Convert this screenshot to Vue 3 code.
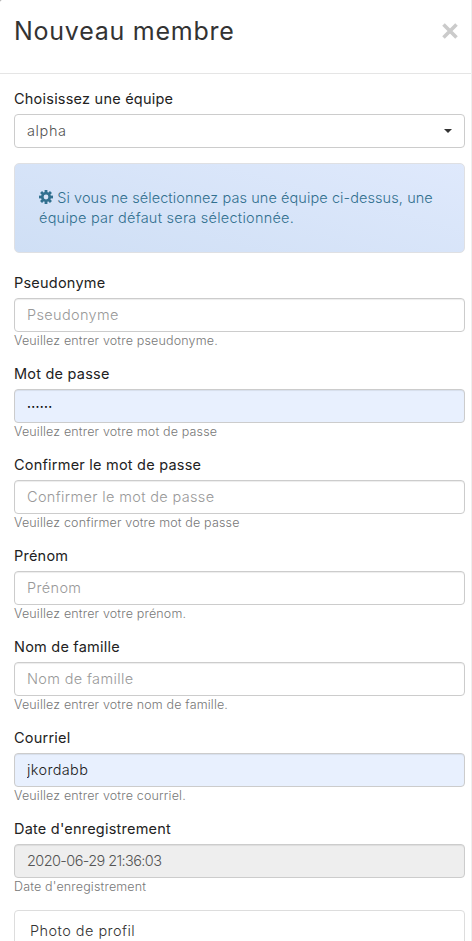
<script setup>
import { reactive } from 'vue'

const fields = reactive([
  { id: 'username', label: 'Pseudonyme', value: '', hint: 'Veuillez entrer votre pseudonyme.' },
  { id: 'password', label: 'Mot de passe', value: 'secret', type: 'password', filled: true, hint: 'Veuillez entrer votre mot de passe' },
  { id: 'confirm', label: 'Confirmer le mot de passe', value: '', hint: 'Veuillez confirmer votre mot de passe' },
  { id: 'firstname', label: 'Prénom', value: '', hint: 'Veuillez entrer votre prénom.' },
  { id: 'lastname', label: 'Nom de famille', value: '', hint: 'Veuillez entrer votre nom de famille.' },
  { id: 'email', label: 'Courriel', value: 'jkordabb', filled: true, hint: 'Veuillez entrer votre courriel.' },
  { id: 'date', label: "Date d'enregistrement", value: '2020-06-29 21:36:03', disabled: true, hint: "Date d'enregistrement" },
])
</script>

<template>
  <div class="modal">
    <header class="modal-header">
      <h1 class="title">Nouveau membre</h1>
      <button class="close" type="button" aria-label="Fermer">
        <svg width="16" height="16" viewBox="0 0 16 16">
          <path d="M1.5 1.5 14.5 14.5M14.5 1.5 1.5 14.5" fill="none" stroke="#cbcbcb" stroke-width="3.6" />
        </svg>
      </button>
    </header>
    <main class="modal-body">
      <div class="group">
        <label class="label">Choisissez une équipe</label>
        <div class="control select">
          <span>alpha</span>
          <svg width="8" height="4" viewBox="0 0 8 4"><path d="M0 0h8L4 4z" fill="#333" /></svg>
        </div>
      </div>
      <div class="alert">
        <svg class="gear" width="14" height="14" viewBox="0 0 14 14">
          <g fill="#31708f">
            <rect x="5.6" y="0" width="2.8" height="14" />
            <rect x="5.6" y="0" width="2.8" height="14" transform="rotate(45 7 7)" />
            <rect x="5.6" y="0" width="2.8" height="14" transform="rotate(90 7 7)" />
            <rect x="5.6" y="0" width="2.8" height="14" transform="rotate(135 7 7)" />
            <circle cx="7" cy="7" r="5" />
          </g>
          <circle cx="7" cy="7" r="2.4" fill="#d8e4f7" />
        </svg>
        Si vous ne sélectionnez pas une équipe ci-dessus, une<br>
        <span class="second">équipe par défaut sera sélectionnée.</span>
      </div>
      <div v-for="f in fields" :key="f.id" class="group">
        <label class="label" :for="f.id">{{ f.label }}</label>
        <input
          :id="f.id"
          v-model="f.value"
          class="control"
          :class="{ filled: f.filled, secret: f.type === 'password' }"
          :type="f.type || 'text'"
          :placeholder="f.label"
          :disabled="f.disabled"
        >
        <small class="hint">{{ f.hint }}</small>
      </div>
      <section class="panel">Photo de profil</section>
    </main>
  </div>
</template>

<style>
body {
  overflow: hidden;
  background: #999;
}
</style>

<style scoped>
* {
  box-sizing: border-box;
}
.modal {
  height: 941px;
  overflow: hidden;
  border-right: 1px solid #eee;
  border-top-left-radius: 2px;
  background: #fff;
  font-family: Inter, "Liberation Sans", sans-serif;
  font-size: 14.5px;
  font-weight: 300;
  line-height: 20px;
  color: #333;
}
.modal-header {
  display: flex;
  justify-content: space-between;
  align-items: center;
  height: 74px;
  padding: 0 13px 11px 14px;
  border-bottom: 1px solid #e5e5e5;
}
.title {
  margin: 0;
  font-size: 25px;
  font-weight: 400;
  line-height: 30px;
  letter-spacing: 0.75px;
}
.close {
  display: flex;
  padding: 0;
  border: 0;
  background: none;
}
.modal-body {
  padding: 15px 6px 0 14px;
}
.group {
  margin-bottom: 15px;
}
.label {
  display: block;
  margin-bottom: 5px;
  font-weight: 400;
  letter-spacing: 0.22px;
  color: #222;
}
.control {
  display: block;
  width: 100%;
  height: 34px;
  padding: 5px 12px 7px;
  border: 1px solid #ccc;
  border-radius: 4px;
  background: #fff;
  box-shadow: inset 0 1px 1px rgba(0, 0, 0, 0.075);
  font: inherit;
  letter-spacing: 0.35px;
  color: #555;
}
.control::placeholder {
  color: #999;
  opacity: 1;
}
.control:disabled {
  background: #eee;
  letter-spacing: -0.6px;
}
.select {
  display: flex;
  align-items: center;
  justify-content: space-between;
  padding: 6px 12px;
  box-shadow: none;
  letter-spacing: 0.6px;
}
.filled {
  background: #e8f0fe;
  color: #222;
}
.secret {
  padding: 6px 12px;
  font-size: 7px;
  letter-spacing: 0.3px;
  color: #000;
}
.hint {
  display: block;
  height: 17px;
  font-size: 12.5px;
  line-height: 17px;
  letter-spacing: 0.16px;
  color: #777;
}
.alert {
  height: 90px;
  margin-bottom: 20px;
  padding: 24px;
  border: 1px solid #dfe0e3;
  border-radius: 5px;
  background: linear-gradient(15deg, #cfdff5, #dfe9fc);
  letter-spacing: 0.08px;
  white-space: nowrap;
  color: #31708f;
}
.second {
  letter-spacing: 0.24px;
}
.gear {
  vertical-align: -1px;
}
.panel {
  height: 60px;
  padding: 10px 15px;
  border: 1px solid #ddd;
  border-radius: 4px;
  letter-spacing: 0.45px;
}
</style>
